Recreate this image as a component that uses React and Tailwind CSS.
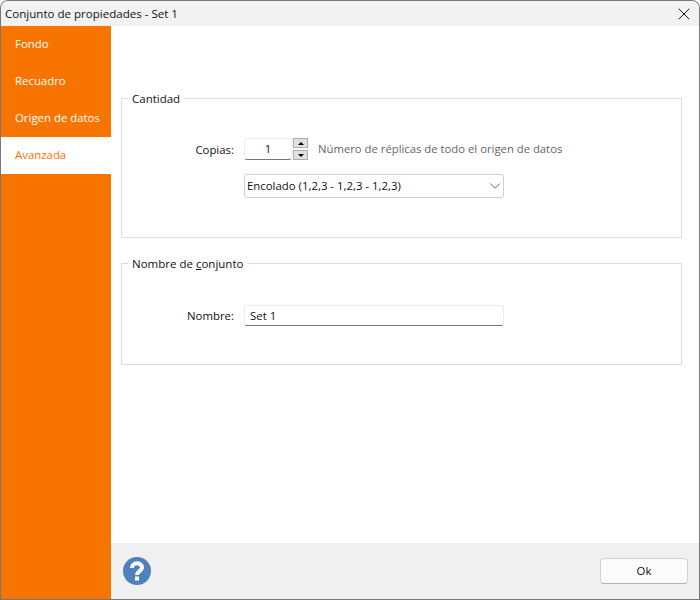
import React from "react";
import { X, ChevronDown } from "lucide-react";

function Group({ title, className, children }) {
  return (
    <fieldset className={`border border-[#dcdcdc] ml-[10px] mr-[17px] pl-[10px] ${className}`}>
      <legend className="pl-[4px] pr-[4px] -ml-[4px] text-[11.5px] leading-[16px] pt-[2px] text-[#111]">{title}</legend>
      {children}
    </fieldset>
  );
}

const items = ["Fondo", "Recuadro", "Origen de datos", "Avanzada"];

export default function App() {
  return (
    <div className="w-[700px] h-[600px] bg-[#777] rounded-t-[8px] p-[1px] font-['Open_Sans',sans-serif] text-[11.4px] text-[#111]">
      <div className="w-full h-full flex flex-col bg-white rounded-t-[7px] overflow-hidden">
        <div className="h-[25px] shrink-0 bg-[#f2f2f2] flex items-center justify-between pl-[4px] pr-[5px]">
          <span className="leading-[16px] pt-[1px] text-[11.55px] text-[#111]">Conjunto de propiedades - Set 1</span>
          <X size={20} strokeWidth={1.1} className="text-black" />
        </div>
        <div className="flex flex-1 min-h-0">
          <nav className="w-[110px] shrink-0 bg-[#f77400] flex flex-col">
            {items.map((t, i) => (
              <div
                key={t}
                className={
                  i === 3
                    ? "h-[37px] flex items-center pl-[14px] pb-[2px] bg-white text-[#f77400]"
                    : "h-[37px] flex items-center pl-[14px] pb-[2px] text-white"
                }
              >
                {t}
              </div>
            ))}
          </nav>
          <div className="flex-1 flex flex-col min-w-0">
            <div className="flex-1 pt-[63px] flex flex-col gap-[16px]">
              <Group title="Cantidad" className="h-[149px]">
                <div className="flex items-center h-[22px] mt-[31px]">
                  <span className="w-[102px] text-right pt-[1px]">Copias:</span>
                  <div className="ml-[10px] w-[48px] h-[22px] bg-white border border-[#ececec] border-b-[#777] rounded-[3px] flex items-center justify-center">1</div>
                  <div className="ml-[1px] w-[15px] h-[22px] flex flex-col justify-between">
                    <div className="h-[10px] bg-[#e1e1e1] border border-[#adadad] flex items-center justify-center">
                      <div className="w-0 h-0 border-x-[3px] border-x-transparent border-b-[3px] border-b-black" />
                    </div>
                    <div className="h-[10px] bg-[#e1e1e1] border border-[#adadad] flex items-center justify-center">
                      <div className="w-0 h-0 border-x-[3px] border-x-transparent border-t-[3px] border-t-black" />
                    </div>
                  </div>
                  <span className="ml-[10px] pt-[1px] text-[11.3px] text-[#666]">Número de réplicas de todo el origen de datos</span>
                </div>
                <div className="ml-[112px] mt-[14px] w-[260px] h-[24px] bg-white border border-[#cfcfcf] rounded-[3px] flex items-center justify-between pl-[2px]">
                  <span>Encolado (1,2,3 - 1,2,3 - 1,2,3)</span>
                  <ChevronDown size={18} strokeWidth={1.2} className="text-[#555] -mr-[1px]" />
                </div>
              </Group>
              <Group title={<>Nombre de <u>c</u>onjunto</>} className="h-[111px]">
                <div className="flex items-center h-[21px] mt-[33px]">
                  <span className="w-[102px] text-right pt-[1px]">Nombre:</span>
                  <div className="ml-[10px] w-[260px] h-[21px] bg-white border border-[#ececec] border-b-[#777] rounded-[3px] flex items-center pl-[5px]">Set 1</div>
                </div>
              </Group>
            </div>
            <div className="h-[56px] shrink-0 bg-[#f0f0f0] flex items-center justify-between pl-[11px] pr-[11px]">
              <svg width="30" height="30" viewBox="0 0 30 30">
                <circle cx="15" cy="15" r="14" fill="#4f81bd" />
                <path d="M10 12 C10 5.8 20 5.8 20 11.5 C20 15.5 15 15 15 19" fill="none" stroke="#fff" strokeWidth="4" />
                <rect x="13" y="20.5" width="4" height="4" fill="#fff" />
              </svg>
              <button className="w-[88px] h-[26px] bg-[#fbfbfb] border border-[#d0d0d0] border-b-[#b0b0b0] rounded-[4px] text-[#111]">Ok</button>
            </div>
          </div>
        </div>
      </div>
    </div>
  );
}
